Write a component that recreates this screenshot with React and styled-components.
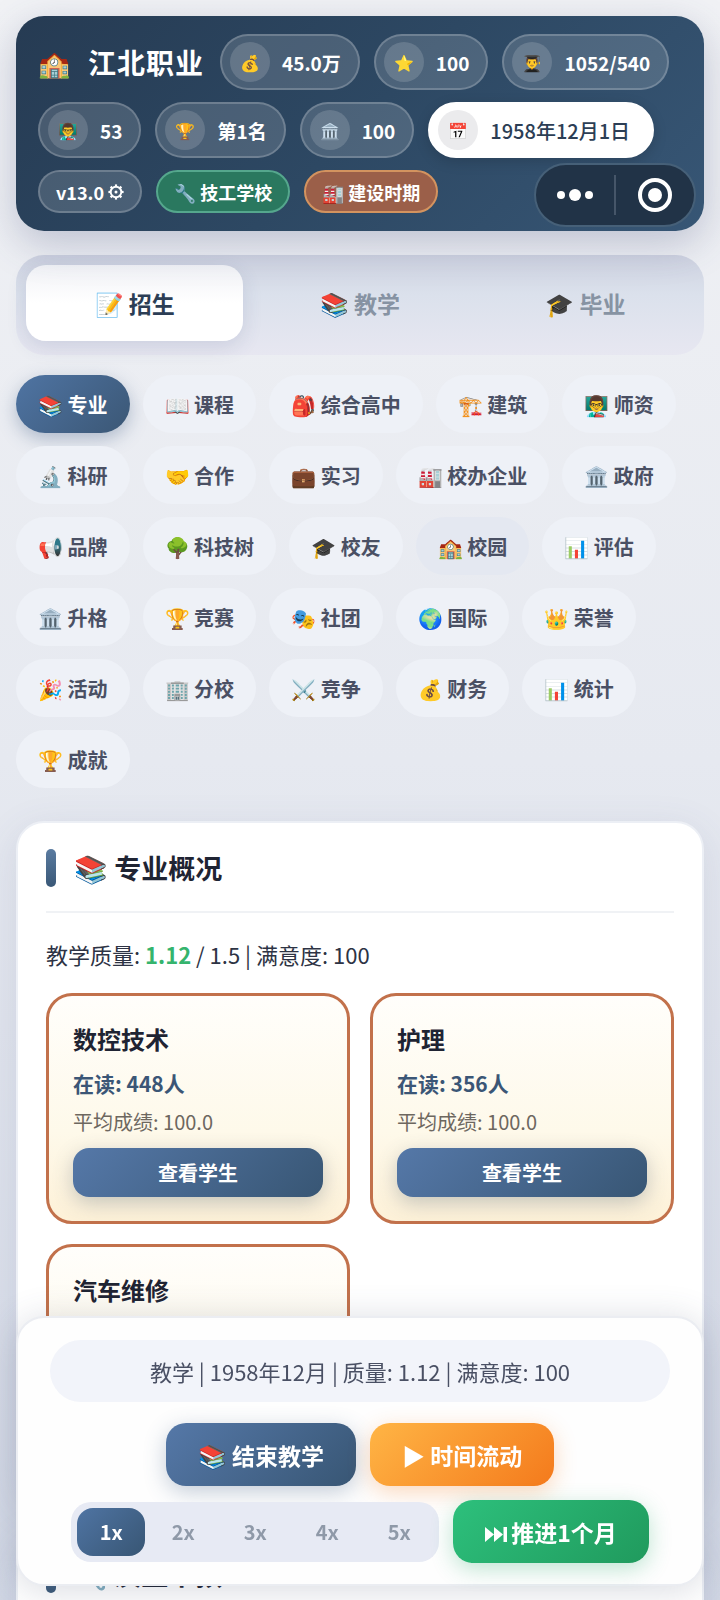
import { useState } from 'react'
import styled, { createGlobalStyle, css } from 'styled-components'

const GlobalStyle = createGlobalStyle`
  * {
    box-sizing: border-box;
  }

  body {
    margin: 0;
    min-height: 100vh;
    background: linear-gradient(180deg, #f1f2f5 0px, #e6e9f0 760px, #d3d9e6 1600px);
    color: #1f2433;
    font-family: 'Noto Sans CJK SC', 'Noto Sans', sans-serif;
  }

  button {
    border: none;
    margin: 0;
    font-family: inherit;
    cursor: pointer;
  }
`

const Page = styled.div`
  height: 100vh;
  padding: 16px 16px 0;
  overflow: hidden;
`

const Header = styled.header`
  position: relative;
  display: flex;
  flex-wrap: wrap;
  align-items: center;
  gap: 12px 14px;
  padding: 18px 22px;
  border-radius: 28px;
  background: linear-gradient(135deg, #263b53 0%, #2d4863 50%, #375675 100%);
  box-shadow: 0 12px 40px rgba(60, 72, 120, 0.28);
`

const School = styled.h1`
  display: flex;
  align-items: center;
  gap: 17px;
  margin: 0 2px 0 0;
  color: #fff;
  font-size: 28px;
  font-weight: 700;
  line-height: 40px;
  letter-spacing: 1px;

  span {
    font-size: 26px;
  }
`

const Stat = styled.div`
  display: flex;
  align-items: center;
  gap: 12px;
  height: 56px;
  padding: 0 17px 0 8px;
  border: 2px solid rgba(255, 255, 255, 0.2);
  border-radius: 28px;
  background: rgba(255, 255, 255, 0.15);
  color: #fff;
  font-size: 19px;
  font-weight: 700;

  ${props => props.$light && css`
    padding-right: 22px;
    border-color: #fff;
    background: #fff;
    box-shadow: 0 4px 14px rgba(0, 0, 0, 0.15);
    color: #2c3e55;
    font-size: 20px;
    font-weight: 500;
  `}
`

const StatIcon = styled.span`
  display: flex;
  align-items: center;
  justify-content: center;
  width: 40px;
  height: 40px;
  border-radius: 50%;
  background: ${props => (props.$light ? '#ebebed' : 'rgba(255, 255, 255, 0.15)')};
  font-size: 16px;
`

const tagColors = {
  plain: ['rgba(255, 255, 255, 0.15)', 'rgba(255, 255, 255, 0.2)'],
  green: ['#2a785f', '#55a78d'],
  brown: ['#9b5f49', '#d3935f'],
}

const Tag = styled.button`
  display: flex;
  align-items: center;
  gap: 4px;
  height: 43px;
  padding: 0 16px;
  border: 2px solid ${props => tagColors[props.$tone][1]};
  border-radius: 22px;
  background: ${props => tagColors[props.$tone][0]};
  color: #fff;
  font-size: 18px;
  font-weight: 700;
  line-height: 24px;
`

const Capsule = styled.div`
  position: absolute;
  right: 8px;
  bottom: 4px;
  display: flex;
  align-items: center;
  width: 162px;
  height: 64px;
  border: 2px solid #466078;
  border-radius: 32px;
  background: #213347;

  button {
    flex: 1;
    display: flex;
    align-items: center;
    justify-content: center;
    height: 40px;
    padding: 0;
    background: none;
  }

  button + button {
    border-left: 2px solid #465669;
  }
`

const Phases = styled.nav`
  display: flex;
  gap: 8px;
  margin-top: 24px;
  padding: 10px 10px 14px;
  border-radius: 28px;
  background: linear-gradient(180deg, #cfd3e1 0%, #dbe1ec 40%, #e7e7f1 100%);
`

const Phase = styled.button`
  flex: 1;
  height: 76px;
  border-radius: 20px;
  background: none;
  color: #8793a3;
  font-size: 23px;
  font-weight: 700;

  ${props => props.$active && css`
    background: linear-gradient(180deg, #f1f2f6 0%, #fff 50%);
    box-shadow: 0 6px 20px rgba(60, 70, 120, 0.14);
    color: #2c3e55;
  `}
`

const Menu = styled.nav`
  display: flex;
  flex-wrap: wrap;
  gap: 13px;
  margin-top: 20px;
`

const Chip = styled.button`
  height: 58px;
  padding: 0 22px;
  border-radius: 29px;
  background: ${props => (props.$hovered ? '#e4e8f1' : '#eef1f7')};
  color: #4a5064;
  font-size: 20px;
  font-weight: 700;

  ${props => props.$active && css`
    background: linear-gradient(135deg, #4f74a3, #3b5775);
    box-shadow: 0 6px 18px rgba(60, 90, 130, 0.35);
    color: #fff;
  `}
`

const Panel = styled.section`
  margin-top: ${props => props.$gap}px;
  padding: 26px 28px;
  border: 2px solid #eceff5;
  border-radius: 28px;
  background: #fff;
  box-shadow: 0 10px 40px rgba(70, 85, 130, 0.12);
`

const PanelTitle = styled.h2`
  display: flex;
  align-items: center;
  gap: 18px;
  margin: 0;
  padding-bottom: 24px;
  border-bottom: 2px solid #f0f2f5;
  font-size: 27px;
  font-weight: 700;
  line-height: 38px;

  &::before {
    content: '';
    width: 10px;
    height: 38px;
    border-radius: 5px;
    background: linear-gradient(180deg, #5a7ba0, #3a5877);
  }
`

const Summary = styled.p`
  margin: 24px 0 22px;
  color: #2d3344;
  font-size: 22px;
  line-height: 34px;

  strong {
    color: #35b46d;
    font-weight: 700;
  }
`

const Majors = styled.div`
  display: grid;
  grid-template-columns: 1fr 1fr;
  gap: 20px;
`

const Major = styled.article`
  display: flex;
  flex-direction: column;
  padding: 24px;
  border: 3px solid #c2714b;
  border-radius: 26px;
  background: linear-gradient(180deg, #fffefb 0%, #fef9ea 60%, #fdf1d8 100%);

  h3 {
    margin: 0;
    font-size: 24px;
    font-weight: 700;
    line-height: 38px;
  }

  p {
    margin: 8px 0 0;
    color: #3b5676;
    font-size: 21px;
    font-weight: 700;
    line-height: 34px;
  }

  small {
    margin: 8px 0 12px;
    color: #6d675f;
    font-size: 20px;
    line-height: 28px;
  }
`

const ViewButton = styled.button`
  height: 49px;
  border-radius: 16px;
  background: linear-gradient(135deg, #5578a8, #385674);
  box-shadow: 0 6px 20px rgba(70, 90, 110, 0.3);
  color: #fff;
  font-size: 20px;
  font-weight: 700;
`

const Dock = styled.footer`
  position: fixed;
  right: 16px;
  bottom: 14px;
  left: 16px;
  display: flex;
  flex-direction: column;
  gap: 21px;
  padding: 22px 32px 21px;
  border: 2px solid #ebedf2;
  border-radius: 28px;
  background: #fefefe;
  box-shadow: 0 4px 36px rgba(60, 70, 100, 0.2);
`

const Status = styled.div`
  border-radius: 31px;
  background: #f2f4fa;
  color: #4a5064;
  font-size: 22px;
  line-height: 62px;
  text-align: center;
`

const Actions = styled.div`
  display: flex;
  flex-wrap: wrap;
  align-items: center;
  justify-content: center;
  gap: 14px;
`

const actionColors = {
  blue: ['#5578a8', '#385674', 'rgba(60, 90, 130, 0.3)'],
  orange: ['#ffb545', '#f47a1c', 'rgba(245, 130, 40, 0.3)'],
  green: ['#2dc07c', '#209a5d', 'rgba(40, 170, 105, 0.3)'],
}

const Action = styled.button`
  height: 63px;
  padding: 0 32px;
  border-radius: 20px;
  background: linear-gradient(135deg, ${props => actionColors[props.$tone][0]}, ${props => actionColors[props.$tone][1]});
  box-shadow: 0 6px 22px ${props => actionColors[props.$tone][2]};
  color: #fff;
  font-size: 23px;
  font-weight: 700;

  svg {
    margin-right: 4px;
  }
`

const Speeds = styled.div`
  display: flex;
  gap: 4px;
  padding: 6px;
  border-radius: 20px;
  background: #e7eaf4;
`

const Speed = styled.button`
  width: 68px;
  height: 48px;
  padding: 0;
  border-radius: 16px;
  background: ${props => (props.$active ? 'linear-gradient(135deg, #4f74a3, #385674)' : 'none')};
  color: ${props => (props.$active ? '#fff' : '#8f99a8')};
  font-size: 20px;
  font-weight: 700;
`

const stats = [
  ['💰', '45.0万'],
  ['⭐', '100'],
  ['👨‍🎓', '1052/540'],
  ['👨‍🏫', '53'],
  ['🏆', '第1名'],
  ['🏛️', '100'],
]

const phases = ['📝 招生', '📚 教学', '🎓 毕业']

const menu = [
  '📚 专业', '📖 课程', '🎒 综合高中', '🏗️ 建筑', '👨‍🏫 师资',
  '🔬 科研', '🤝 合作', '💼 实习', '🏭 校办企业', '🏛️ 政府',
  '📢 品牌', '🌳 科技树', '🎓 校友', '🏫 校园', '📊 评估',
  '🏛️ 升格', '🏆 竞赛', '🎭 社团', '🌍 国际', '👑 荣誉',
  '🎉 活动', '🏢 分校', '⚔️ 竞争', '💰 财务', '📊 统计',
  '🏆 成就',
]

const majors = [
  { name: '数控技术', students: 448, score: '100.0' },
  { name: '护理', students: 356, score: '100.0' },
  { name: '汽车维修', students: 248, score: '100.0' },
]

function Gear() {
  return (
    <svg width="16" height="16" viewBox="0 0 16 16" fill="none" stroke="#fff">
      <circle cx="8" cy="8" r="5.300" strokeWidth="1.900" />
      <circle cx="8" cy="8" r="1.500" fill="#fff" stroke="none" />
      {[0, 45, 90, 135, 180, 225, 270, 315].map(a => (
        <path key={a} d="M8 2.500V0.400" strokeWidth="2.200" transform={`rotate(${a} 8 8)`} />
      ))}
    </svg>
  )
}

export default function App() {
  const [phase, setPhase] = useState(0)
  const [page, setPage] = useState(0)
  const [speed, setSpeed] = useState(1)

  return (
    <>
      <GlobalStyle />
      <Page>
        <Header>
          <School><span>🏫</span>江北职业</School>
          {stats.map(([icon, value], i) => (
            <Stat key={i}>
              <StatIcon>{icon}</StatIcon>
              {value}
            </Stat>
          ))}
          <Stat $light>
            <StatIcon $light>📅</StatIcon>
            1958年12月1日
          </Stat>
          <Tag $tone="plain">v13.0 <Gear /></Tag>
          <Tag $tone="green">🔧 技工学校</Tag>
          <Tag $tone="brown">🏭 建设时期</Tag>
          <Capsule>
            <button aria-label="更多">
              <svg width="36" height="14" viewBox="0 0 36 14" fill="#fff">
                <circle cx="4" cy="7" r="4" />
                <circle cx="18" cy="7" r="6" />
                <circle cx="32" cy="7" r="4" />
              </svg>
            </button>
            <button aria-label="关闭">
              <svg width="34" height="34" viewBox="0 0 34 34">
                <circle cx="17" cy="17" r="15" fill="none" stroke="#fff" strokeWidth="4" />
                <circle cx="17" cy="17" r="7" fill="#fff" />
              </svg>
            </button>
          </Capsule>
        </Header>

        <Phases>
          {phases.map((item, i) => (
            <Phase key={item} $active={phase === i} onClick={() => setPhase(i)}>{item}</Phase>
          ))}
        </Phases>

        <Menu>
          {menu.map((item, i) => (
            <Chip key={item} $active={page === i} $hovered={i === 13} onClick={() => setPage(i)}>{item}</Chip>
          ))}
        </Menu>

        <Panel $gap={33}>
          <PanelTitle>📚 专业概况</PanelTitle>
          <Summary>教学质量: <strong>1.12</strong> / 1.5 | 满意度: 100</Summary>
          <Majors>
            {majors.map(item => (
              <Major key={item.name}>
                <h3>{item.name}</h3>
                <p>在读: {item.students}人</p>
                <small>平均成绩: {item.score}</small>
                <ViewButton>查看学生</ViewButton>
              </Major>
            ))}
          </Majors>
        </Panel>

        <Panel $gap={24}>
          <PanelTitle>🔧 质量干预</PanelTitle>
        </Panel>
      </Page>

      <Dock>
        <Status>教学 | 1958年12月 | 质量: 1.12 | 满意度: 100</Status>
        <Actions>
          <Action $tone="blue">📚 结束教学</Action>
          <Action $tone="orange">▶ 时间流动</Action>
          <Speeds>
            {[1, 2, 3, 4, 5].map(n => (
              <Speed key={n} $active={speed === n} onClick={() => setSpeed(n)}>{n}x</Speed>
            ))}
          </Speeds>
          <Action $tone="green">
            <svg width="22" height="15" viewBox="0 0 22 15" fill="#fff">
              <path d="M0 0l9 7.5L0 15zM9 0l9 7.5L9 15zM18.500 0H22v15h-3.500z" />
            </svg>
            推进1个月
          </Action>
        </Actions>
      </Dock>
    </>
  )
}
